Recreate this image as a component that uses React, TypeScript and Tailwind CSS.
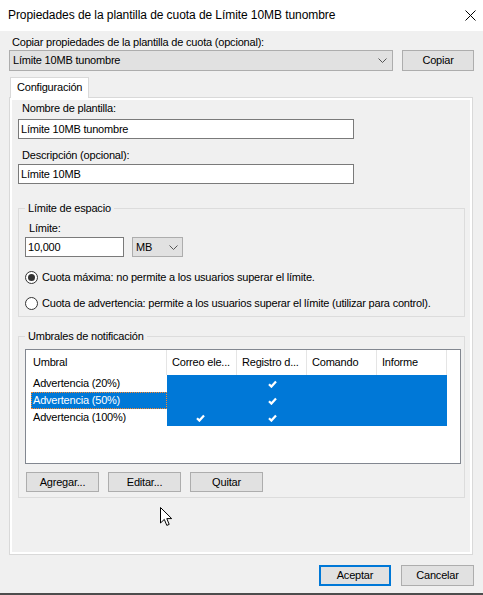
import React from 'react';

const btn =
  'h-[20px] border border-[#adadad] bg-[#e1e1e1] flex items-center justify-center text-black';

function Chevron() {
  return (
    <svg width="9" height="5" viewBox="0 0 9 5" className="shrink-0">
      <polyline points="0.5,0.5 4.5,4.5 8.5,0.5" fill="none" stroke="#555" strokeWidth="1" />
    </svg>
  );
}

function Check() {
  return (
    <svg width="9" height="8" viewBox="0 0 9 8">
      <polyline points="1,4.2 3.4,6.6 8,1.4" fill="none" stroke="#fff" strokeWidth="2.2" />
    </svg>
  );
}

function Radio({ checked, label }: { checked?: boolean; label: string }) {
  return (
    <div className="flex items-center h-[14px] ml-[6px]">
      <span className="w-[13px] h-[13px] rounded-full border border-[#333] bg-white flex items-center justify-center">
        {checked && <span className="w-[7px] h-[7px] rounded-full bg-[#333]" />}
      </span>
      <span className="ml-[4px]">{label}</span>
    </div>
  );
}

const rows = [
  { name: 'Advertencia (20%)', mail: false, log: true, selected: false },
  { name: 'Advertencia (50%)', mail: false, log: true, selected: true },
  { name: 'Advertencia (100%)', mail: true, log: true, selected: false },
];

const cols = ['Correo ele...', 'Registro d...', 'Comando', 'Informe'];

export default function App() {
  return (
    <div className="relative w-[483px] h-[595px] bg-[#f0f0f0] flex flex-col overflow-hidden font-['Liberation_Sans',Arial,sans-serif] text-[11px] leading-[13px] tracking-[-0.2px] text-black">
      {/* title bar */}
      <div className="h-[31px] bg-white flex items-center justify-between pl-[8px] pr-[7px] shrink-0">
        <span className="text-[12px] tracking-[-0.07px]">Propiedades de la plantilla de cuota de Límite 10MB tunombre</span>
        <svg width="11" height="11" viewBox="0 0 11 11">
          <path d="M0.5 0.5 L10.5 10.5 M10.5 0.5 L0.5 10.5" stroke="#000" strokeWidth="1" />
        </svg>
      </div>

      <div className="px-[9px] flex flex-col">
        <div className="mt-[5px] h-[13px] pl-[3px]">Copiar propiedades de la plantilla de cuota (opcional):</div>
        <div className="mt-[1px] flex gap-[9px] h-[21px]">
          <div className="w-[384px] border border-[#adadad] bg-[#e1e1e1] flex items-center justify-between pl-[3px] pr-[5px]">
            <span>Límite 10MB tunombre</span>
            <Chevron />
          </div>
          <div className={btn + ' w-[72px] h-[21px]'}>Copiar</div>
        </div>

        {/* tab */}
        <div className="mt-[6px] ml-[1px] w-[79px] h-[21px] border border-b-0 border-[#d9d9d9] bg-white relative z-10 pl-[6px] pt-[3px]">
          Configuración
        </div>
        <div className="-mt-[1px] w-[464px] h-[458px] border border-[#d9d9d9] shadow-[inset_0_0_0_2px_#fff] flex flex-col">
          <div className="mt-[4px] pl-[12px] h-[13px]">Nombre de plantilla:</div>
          <div className="mt-[4px] ml-[8px] w-[336px] h-[20px] border border-[#7a7a7a] bg-white flex items-center pl-[2px]">
            Límite 10MB tunombre
          </div>
          <div className="mt-[10px] pl-[12px] h-[13px]">Descripción (opcional):</div>
          <div className="mt-[2px] ml-[8px] w-[336px] h-[20px] border border-[#7a7a7a] bg-white flex items-center pl-[2px]">
            Límite 10MB
          </div>

          <fieldset className="mt-[18px] ml-[8px] w-[447px] border border-[#dcdcdc] pb-[6px]">
            <legend className="ml-[6px] px-[3px] h-[13px]">Límite de espacio</legend>
            <div className="mt-[7px] ml-[10px] h-[13px]">Límite:</div>
            <div className="mt-[2px] ml-[6px] flex gap-[8px] h-[20px]">
              <div className="w-[99px] border border-[#7a7a7a] bg-white flex items-center pl-[2px]">10,000</div>
              <div className="w-[51px] border border-[#adadad] bg-[#e1e1e1] flex items-center justify-between pl-[3px] pr-[4px]">
                <span>MB</span>
                <Chevron />
              </div>
            </div>
            <div className="mt-[13px]">
              <Radio checked label="Cuota máxima: no permite a los usuarios superar el límite." />
            </div>
            <div className="mt-[12px]">
              <Radio label="Cuota de advertencia: permite a los usuarios superar el límite (utilizar para control)." />
            </div>
          </fieldset>

          <fieldset className="mt-[13px] ml-[8px] w-[447px] border border-[#dcdcdc] pb-[5px]">
            <legend className="ml-[6px] px-[3px] h-[13px]">Umbrales de notificación</legend>
            <div className="mt-[6px] ml-[6px] w-[436px] h-[115px] border border-[#828790] bg-white flex flex-col">
              <div className="flex h-[25px]">
                <div className="w-[141px] border-r border-[#e5e5e5] flex items-center pl-[7px]">Umbral</div>
                {cols.map((c) => (
                  <div key={c} className="w-[70px] border-r border-[#e5e5e5] flex items-center pl-[5px]">
                    {c}
                  </div>
                ))}
              </div>
              {rows.map((r) => (
                <div key={r.name} className="flex h-[17px]">
                  <div className="w-[141px] pl-[5px] flex">
                    <div
                      className={
                        r.selected
                          ? 'flex-1 flex items-center pl-[2px] bg-[#0078d7] text-white outline-1 outline-dotted outline-offset-[-1px] outline-[#ff8728]'
                          : 'flex-1 flex items-center pl-[2px]'
                      }
                    >
                      {r.name}
                    </div>
                  </div>
                  <div className="w-[280px] flex bg-[#0078d7]">
                    <div className="w-[70px] flex items-center justify-center pr-[4px]">{r.mail && <Check />}</div>
                    <div className="w-[70px] flex items-center justify-center">{r.log && <Check />}</div>
                  </div>
                </div>
              ))}
            </div>
            <div className="mt-[8px] ml-[7px] flex gap-[9px]">
              <div className={btn + ' w-[73px]'}>Agregar...</div>
              <div className={btn + ' w-[73px]'}>Editar...</div>
              <div className={btn + ' w-[73px]'}>Quitar</div>
            </div>
          </fieldset>
        </div>

        <div className="mt-[10px] flex justify-end gap-[10px]">
          <div className="w-[72px] h-[21px] border-2 border-[#0078d7] bg-[#e1e1e1] flex items-center justify-center">
            Aceptar
          </div>
          <div className={btn + ' w-[73px] h-[21px]'}>Cancelar</div>
        </div>
      </div>

      <div className="mt-auto h-[2px] bg-[#4d4d4d]" />

      {/* mouse pointer */}
      <svg className="absolute left-[160px] top-[507px]" width="13" height="20" viewBox="0 0 13 20">
        <path
          d="M0.5 0.5 L0.5 16 L4.3 12.4 L6.8 18.4 L9.2 17.4 L6.8 11.6 L11.7 11.6 Z"
          fill="#fff"
          stroke="#000"
          strokeWidth="1"
          strokeLinejoin="miter"
        />
      </svg>
    </div>
  );
}
